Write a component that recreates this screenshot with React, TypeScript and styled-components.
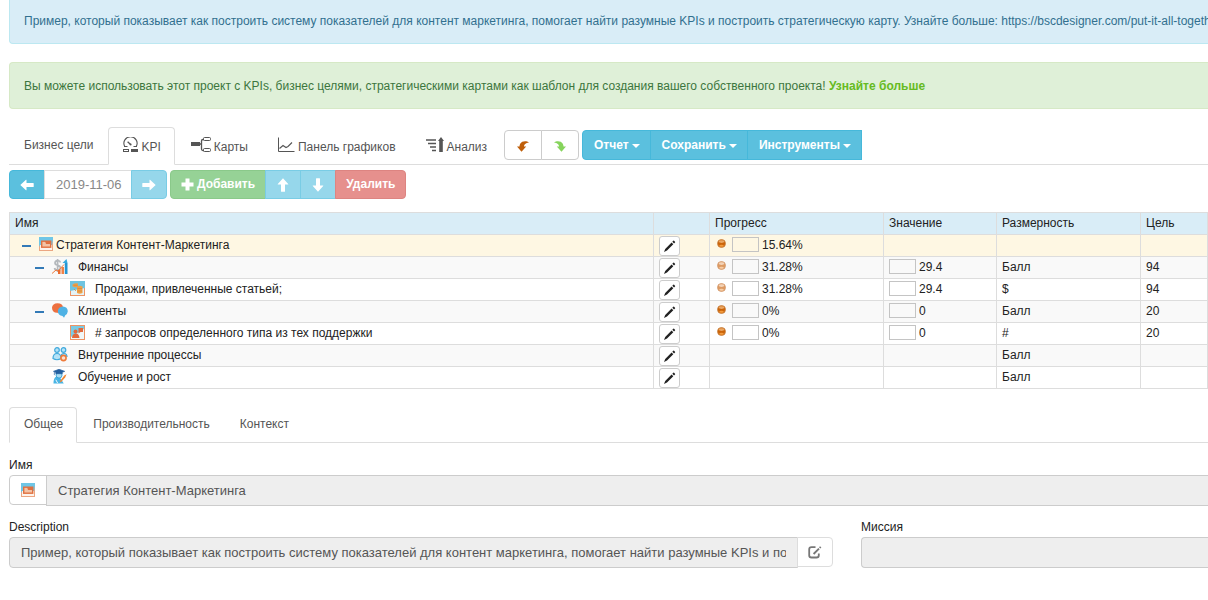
import React from "react";
import styled, { createGlobalStyle, css } from "styled-components";

const GlobalStyle = createGlobalStyle`
  * { box-sizing: border-box; }
  body {
    margin: 0;
    background: #fff;
    color: #222;
    font: 12px/17px "Liberation Sans", Arial, sans-serif;
    overflow-x: hidden;
  }
  button, input { font-family: inherit; margin: 0; }
  svg { display: block; flex: none; }
`;

/* ---------- page and notices ---------- */

const Page = styled.main`
  padding-left: 9px;
  overflow: hidden;
`;

const Notice = styled.div<{ $tone: "info" | "success"; $first?: boolean }>`
  padding: 15px 0 13px 14px;
  margin-bottom: 18px;
  border: 1px solid;
  border-right: 0;
  border-radius: 4px 0 0 4px;
  white-space: nowrap;
  overflow: hidden;
  ${(p) =>
    p.$tone === "info"
      ? css`background: #d9edf7; border-color: #bce8f1; color: #31708f;`
      : css`background: #dff0d8; border-color: #d6e9c6; color: #3c763d;`}
  ${(p) => p.$first && css`border-top: 0; border-top-left-radius: 0; padding-top: 13px;`}
`;

const NoticeLink = styled.a`
  color: #66bb22;
  font-weight: bold;
  text-decoration: none;
`;

/* ---------- tabs ---------- */

const TabBar = styled.div<{ $tall?: boolean }>`
  display: flex;
  align-items: flex-end;
  height: ${(p) => (p.$tall ? 38 : 36)}px;
  border-bottom: 1px solid #ddd;
`;

const TabList = styled.div`
  display: flex;
  align-self: stretch;
  gap: 1px;
  margin-bottom: -1px;
`;

const Tab = styled.button<{ $active?: boolean; $icon?: boolean }>`
  display: flex;
  align-items: center;
  gap: 3px;
  padding: ${(p) => (p.$icon ? "3px 13px 0 14px" : "0 13px 1px 14px")};
  border: 1px solid transparent;
  border-radius: 4px 4px 0 0;
  background: transparent;
  color: #555;
  font-size: 12px;
  line-height: 17px;
  white-space: nowrap;
  ${(p) => p.$active && css`background: #fff; border-color: #ddd; border-bottom-color: #fff;`}
`;

const TabIcon = styled.span`
  align-self: flex-start;
  padding-top: 6px;
`;

/* ---------- buttons ---------- */

type Tone = "plain" | "info" | "infoPale" | "successPale" | "dangerPale";

const tones = {
  plain: css`background: #fff; border-color: #ccc; color: #333;`,
  info: css`background: #5bc0de; border-color: #46b8da; color: #fff;`,
  infoPale: css`background: #96d7eb; border-color: #79cce5; color: #fff;`,
  successPale: css`background: #96d296; border-color: #8ac98a; color: #fff;`,
  dangerPale: css`background: #e6908d; border-color: #dd8481; color: #fff;`,
};

const Button = styled.button<{ $tone: Tone; $width?: number }>`
  display: flex;
  align-items: center;
  justify-content: center;
  gap: 3px;
  height: 100%;
  padding: 0 10px;
  border: 1px solid;
  font-size: 12px;
  font-weight: bold;
  line-height: 17px;
  white-space: nowrap;
  ${(p) => tones[p.$tone]}
  ${(p) => p.$width && css`width: ${p.$width}px; padding: 0;`}
`;

const Group = styled.div<{ $height: number; $square?: boolean }>`
  display: flex;
  height: ${(p) => p.$height}px;
  & > * + * { margin-left: -1px; }
  & > :first-child { border-radius: 4px 0 0 4px; }
  & > :last-child { border-radius: ${(p) => (p.$square ? "0" : "0 4px 4px 0")}; }
`;

const MenuButton = styled(Button)`
  padding: 0 11px;
`;

const Caret = styled.span`
  border: 4px solid transparent;
  border-top-color: currentColor;
  border-bottom: 0;
  margin-top: 2px;
  margin-right: -1px;
`;

const TabActions = styled.div`
  display: flex;
  gap: 3px;
  margin: 0 0 4px 3px;
`;

const Toolbar = styled.div`
  display: flex;
  gap: 3px;
  margin: 5px 0 13px;
`;

const DateInput = styled.input`
  width: 88px;
  padding: 0 8px 0 11px;
  border: 1px solid #ddd;
  color: #888;
  background: #fff;
  font-size: 13px;
`;

/* ---------- tree table ---------- */

const Table = styled.table`
  width: 100%;
  table-layout: fixed;
  border-collapse: collapse;
  color: #222;
`;

const HeadCell = styled.th`
  height: 22px;
  padding: 0 5px;
  border: 1px solid #ddd;
  background: #d9edf7;
  font-weight: normal;
  text-align: left;
  line-height: 17px;
`;

const Row = styled.tr<{ $selected?: boolean }>`
  background: #fff;
  &:nth-child(even) { background: #f9f9f9; }
  ${(p) => p.$selected && css`&& { background: #fef7e3; }`}
`;

const Cell = styled.td`
  height: 22px;
  padding: 0 5px;
  border: 1px solid #ddd;
  line-height: 17px;
`;

const NameLine = styled.div<{ $level: number }>`
  display: flex;
  align-items: center;
  height: 19px;
  padding-left: ${(p) => (p.$level === 0 ? 7 : 20)}px;
`;

const Toggle = styled.button`
  width: 9px;
  height: 2px;
  padding: 0;
  border: 0;
  background: #337ab7;
`;

const ToggleSpace = styled.span`
  width: 9px;
`;

const NodeIcon = styled.span<{ $level: number }>`
  padding: 0 ${(p) => (p.$level === 0 ? 3 : 10)}px 3px ${(p) => (p.$level === 2 ? 26 : 8)}px;
`;

const EditButton = styled(Button)`
  width: 21px;
  height: 20px;
  padding: 0;
  margin-top: 1px;
  border-radius: 3px;
`;

const ValueLine = styled.div`
  display: flex;
  align-items: center;
  gap: 3px;
`;

const MiniChart = styled.span`
  width: 27px;
  height: 15px;
  margin-bottom: 2px;
  border: 1px solid #c4c4c4;
`;

const Light = styled.span`
  margin: 0 3px 4px 2px;
`;

/* ---------- form ---------- */

const Form = styled.form`
  padding-top: 18px;
`;

const TabPanel = styled.div`
  padding-top: 14px;
`;

const Columns = styled.div`
  display: grid;
  grid-template-columns: 824fr 347fr;
  column-gap: 28px;
  margin-top: 13px;
`;

const Label = styled.label`
  display: block;
  height: 18px;
  line-height: 17px;
`;

const FieldLine = styled.div`
  display: flex;
  align-items: flex-start;
`;

const TextInput = styled.input<{ $corner: "left" | "none" }>`
  flex: 1;
  min-width: 0;
  height: 31px;
  padding: 0 11px;
  border: 1px solid #ccc;
  border-radius: ${(p) => (p.$corner === "left" ? "4px 0 0 4px" : "0")};
  background: #eee;
  color: #555;
  font-size: 13px;
`;

const OpenInput = styled(TextInput)`
  border-right: 0;
`;

const FieldButton = styled(Button)<{ $side: "left" | "right" }>`
  width: ${(p) => (p.$side === "left" ? 38 : 36)}px;
  height: 30px;
  padding: 0;
  border-color: ${(p) => (p.$side === "left" ? "#ccc" : "#ddd")};
  border-radius: ${(p) => (p.$side === "left" ? "4px 0 0 4px" : "0 4px 4px 0")};
  margin-right: ${(p) => (p.$side === "left" ? "-1px" : "0")};
  margin-left: ${(p) => (p.$side === "left" ? "0" : "-1px")};
`;

/* ---------- icons ---------- */

const GaugeIcon = () => (
  <svg width="15" height="16" viewBox="0 0 15 16" fill="none" stroke="#555">
    <path d="M1 9.500H4.500M10.500 9.500H14M1.600 9.300A6.600 6.600 0 1 1 13.400 9.300" strokeWidth="1.100" />
    <path d="M7.600 7.600 4.600 4.800" strokeWidth="1.300" />
    <circle cx="7.600" cy="7.600" r="1" fill="#555" stroke="none" />
    <rect x=".5" y="12.500" width="5" height="2" />
    <rect x="8" y="12" width="7" height="3" fill="#555" stroke="none" />
  </svg>
);

const MapIcon = () => (
  <svg width="20" height="16" viewBox="0 0 20 16" fill="none" stroke="#555">
    <rect x="0" y="5" width="9" height="4" fill="#555" stroke="none" />
    <path d="M9 7h1.500M13 2.500h-1q-1.500 0-1.500 1.500v8q0 1.500 1.500 1.500h1" strokeWidth="1.300" />
    <rect x="12.500" y=".5" width="7" height="3" rx="1" />
    <rect x="12.500" y="11.500" width="7" height="3" rx="1" />
  </svg>
);

const ChartIcon = () => (
  <svg width="17" height="16" viewBox="0 0 17 16" fill="none" stroke="#555">
    <path d="M.5.500V14.500H16.500" />
    <path d="M1.500 11.500 5 8.500 8 10.500 10 9.500 14 5.500" strokeWidth="1.100" />
  </svg>
);

const AnalysisIcon = () => (
  <svg width="18" height="16" viewBox="0 0 18 16" fill="none" stroke="#555">
    <path d="M0 3h10M2 6.500h8M4 10h6M6 13.500h4" strokeWidth="1.600" />
    <path d="M15 0 18 4H16.800V15H13.200V4H12z" fill="#555" stroke="none" />
  </svg>
);

const TurnIcon = ({ flip, color }: { flip?: boolean; color: string }) => (
  <svg width="12" height="13" viewBox="0 -2 12 13">
    <path
      transform={flip ? "matrix(-1 0 0 1 12 0)" : undefined}
      d="M12 1.400C9.500-.3 4.800-.3 3.200 2.800 2.700 3.800 2.500 4.600 2.500 5.400H0L4.500 10.800 9.200 5.400H7C7 3.400 8.500 1.800 12 1.400z"
      fill={color}
    />
  </svg>
);

const ArrowIcon = ({ turn = 0 }: { turn?: number }) => (
  <svg width="14" height="14" viewBox="0 0 14 14">
    <path
      transform={`rotate(${turn} 7 7)`}
      d="M.3 7 6 1.800Q6.500 1.400 6.500 2V5H13.200Q13.700 5 13.700 5.500V8.500Q13.700 9 13.200 9H6.500V12Q6.500 12.600 6 12.200z"
      fill="#fff"
    />
  </svg>
);

const PlusIcon = () => (
  <svg width="13" height="13" viewBox="0 0 13 13">
    <path d="M4.500.500h4v4h4v4h-4v4h-4v-4h-4v-4h4z" fill="#fff" />
  </svg>
);

const PencilIcon = () => (
  <svg width="13" height="13" viewBox="0 0 13 13" fill="#222">
    <path d="M8.600 2.500 10.300 4.200 4 10.500 1 12 2.200 8.900zM9.300 1.800l1-1q.4-.4.8 0l.9.900q.4.400 0 .8l-1 1z" />
  </svg>
);

const EditIcon = () => (
  <svg width="14" height="13" viewBox="0 0 14 13" fill="none" stroke="#777">
    <path d="M7.500 1.200H3.500Q1.200 1.200 1.200 3.500V9.200Q1.200 11.500 3.500 11.500H8.500Q10.800 11.500 10.800 9.200V7.500" strokeWidth="1.800" />
    <path d="M5.600 8 11 2.600M11.700 1.900l1-1" strokeWidth="1.900" />
  </svg>
);

const LightIcon = ({ pale }: { pale?: boolean }) => (
  <svg width="9" height="9" viewBox="0 0 9 9">
    <circle cx="4.500" cy="4.500" r="4" fill={pale ? "#dd9a62" : "#cc6408"} stroke={pale ? "#d39a70" : "#c98548"} strokeWidth=".8" />
    <ellipse cx="4.500" cy="2.600" rx="2.800" ry="1.300" fill={pale ? "#f3d3b8" : "#eaa765"} />
    <ellipse cx="4.500" cy="6.800" rx="2.300" ry="1" fill={pale ? "#f6cda6" : "#f39b3e"} />
  </svg>
);

const BoardIcon = () => (
  <svg width="14" height="14" viewBox="0 0 14 14">
    <rect x=".5" y=".5" width="13" height="13" fill="#fdf3ec" stroke="#eba682" />
    <path d="M0 0h14v3L13 8H1L0 10z" fill="#6fc6e6" />
    <rect x="2.700" y="4.200" width="9" height="6" fill="#f3c3a6" stroke="#e07040" strokeWidth="1.400" />
    <path d="M6 4h6v3H7z" fill="#e07040" />
  </svg>
);

const FinanceIcon = () => (
  <svg width="16" height="15" viewBox="0 0 16 15">
    <path d="M8.500 3.500Q8 1.500 5.500 1.600 3 1.800 3 4 3 5.600 5.500 6.300 8.600 7 8.500 9.200 8.300 11.300 5.500 11.300 3 11.300 2.500 9M5.600 0v13" fill="none" stroke="#b4b8bc" strokeWidth="1.700" />
    <path d="M0 14.500 4 11 6 12 12 5.500" fill="none" stroke="#ee7a3a" />
    <rect x="6" y="11" width="2.500" height="4" fill="#ec6b2d" />
    <rect x="9.500" y="8" width="2.500" height="7" fill="#f08045" />
    <rect x="12.800" y="4" width="2.700" height="11" fill="#2696d3" />
    <path d="M10.500 4 14.500 0 15.500 4z" fill="#35a8de" />
  </svg>
);

const MoneyIcon = () => (
  <svg width="15" height="15" viewBox="0 0 15 15">
    <rect x=".5" y=".5" width="14" height="14" fill="#e4f3f7" stroke="#ec9465" />
    <path d="M0 0h15v7L0 10z" fill="#6fc4e0" />
    <path d="M2.500 3.500Q5 1.500 8 2.500V5L6 6.500 2.500 5.500zM7 5.500Q9.500 4 12.500 5.500V12Q9.500 13.500 7 12z" fill="#f0a047" />
    <path d="M3.500 4.300h4M7.500 7.500h4.500M7.500 10h4.500M4 8l2 2" stroke="#d58a3c" strokeWidth=".8" fill="none" />
  </svg>
);

const ClientsIcon = () => (
  <svg width="16" height="15" viewBox="0 0 16 15">
    <path d="M0 4.500Q.5.500 5.500.3 10.500.3 11 4.500L7 10 3 9.500Q0 8 0 4.500z" fill="#ec7040" />
    <path d="M5.800 8Q6.200 3.800 11 3.500 15.500 3.800 15.800 8.300 15.600 11 13.300 12.300L12 14.800 10.500 13Q6 12.600 5.800 8z" fill="#4fb2e4" />
  </svg>
);

const SupportIcon = () => (
  <svg width="15" height="15" viewBox="0 0 15 15">
    <rect x=".5" y=".5" width="14" height="14" fill="#f0f7f8" stroke="#ec9465" />
    <path d="M1 1h13v3L1 12z" fill="#7acae4" />
    <circle cx="5.500" cy="6.500" r="2" fill="#e2693c" />
    <path d="M2 13q0-4 3.500-4.500T9.500 13zM8.500 3H13v4h-2.500L8.500 8.500z" fill="#e2693c" />
  </svg>
);

const ProcessIcon = () => (
  <svg width="16" height="15" viewBox="0 0 16 15">
    <g fill="#b5e3f7" stroke="#3fa9dc" strokeWidth="1.200">
      <circle cx="5" cy="3" r="2.300" />
      <circle cx="11.500" cy="3" r="2.300" />
      <path d="M1 11.500Q1 6.500 5 6.500T9 11.500Q5 14 1 11.500z" />
      <path d="M9 10Q9 6.500 12 6.500T15 10" />
    </g>
    <circle cx="11.500" cy="11" r="2.600" fill="#fbe1cf" stroke="#ee7b3b" strokeWidth="1.600" />
  </svg>
);

const LearningIcon = () => (
  <svg width="16" height="15" viewBox="0 0 16 16">
    <path d="M1 15.500Q1 9.500 4 8L8 9l4 6.500z" fill="#49b5e5" />
    <circle cx="7" cy="6.500" r="3.200" fill="#a9def5" stroke="#3a9fd3" />
    <path d="M1 2.500 7 .3 13 2.500 10.500 3.500V5H3.500V3.500zM2 3v3.500" fill="#235f9f" stroke="#235f9f" strokeWidth=".7" />
    <path d="M7.500 13.500 12.500 7 15 5.500 13.500 9 9 14z" fill="#f18a35" />
    <path d="M3.500 11.500 5.500 15" stroke="#fff" />
  </svg>
);

/* ---------- data ---------- */

interface Item {
  name: string;
  level: 0 | 1 | 2;
  icon: React.ReactNode;
  open?: boolean;
  progress?: string;
  pale?: boolean;
  value?: string;
  unit?: string;
  target?: string;
}

const items: Item[] = [
  { name: "Стратегия Контент-Маркетинга", level: 0, icon: <BoardIcon />, open: true, progress: "15.64%" },
  { name: "Финансы", level: 1, icon: <FinanceIcon />, open: true, progress: "31.28%", pale: true, value: "29.4", unit: "Балл", target: "94" },
  { name: "Продажи, привлеченные статьей;", level: 2, icon: <MoneyIcon />, progress: "31.28%", pale: true, value: "29.4", unit: "$", target: "94" },
  { name: "Клиенты", level: 1, icon: <ClientsIcon />, open: true, progress: "0%", value: "0", unit: "Балл", target: "20" },
  { name: "# запросов определенного типа из тех поддержки", level: 2, icon: <SupportIcon />, progress: "0%", value: "0", unit: "#", target: "20" },
  { name: "Внутренние процессы", level: 1, icon: <ProcessIcon />, unit: "Балл" },
  { name: "Обучение и рост", level: 1, icon: <LearningIcon />, unit: "Балл" },
];

const description =
  "Пример, который показывает как построить систему показателей для контент маркетинга, помогает найти разумные KPIs и построить стратегическую карту. Узнайте больше: https://bscdesigner.com/put-it-all-together.htm";

export default function App() {
  return (
    <>
      <GlobalStyle />
      <Page>
        <Notice $tone="info" $first>{description}</Notice>
        <Notice $tone="success">
          Вы можете использовать этот проект с KPIs, бизнес целями, стратегическими картами как шаблон для создания вашего
          собственного проекта! <NoticeLink href="#more">Узнайте больше</NoticeLink>
        </Notice>

        <TabBar $tall>
          <TabList role="tablist">
            <Tab role="tab">Бизнес цели</Tab>
            <Tab role="tab" aria-selected $active $icon><TabIcon><GaugeIcon /></TabIcon>KPI</Tab>
            <Tab role="tab" $icon><TabIcon><MapIcon /></TabIcon>Карты</Tab>
            <Tab role="tab" $icon><TabIcon><ChartIcon /></TabIcon>Панель графиков</Tab>
            <Tab role="tab" $icon><TabIcon><AnalysisIcon /></TabIcon>Анализ</Tab>
          </TabList>
          <TabActions>
            <Group $height={30}>
              <Button $tone="plain" $width={38} aria-label="Отменить"><TurnIcon color="#bf5f0a" /></Button>
              <Button $tone="plain" $width={38} aria-label="Повторить"><TurnIcon flip color="#86d45c" /></Button>
            </Group>
            <Group $height={30} $square>
              <MenuButton $tone="info">Отчет<Caret /></MenuButton>
              <MenuButton $tone="info">Сохранить<Caret /></MenuButton>
              <MenuButton $tone="info">Инструменты<Caret /></MenuButton>
            </Group>
          </TabActions>
        </TabBar>

        <Toolbar>
          <Group $height={29}>
            <Button $tone="info" $width={36} aria-label="Предыдущая дата"><ArrowIcon /></Button>
            <DateInput aria-label="Дата" defaultValue="2019-11-06" />
            <Button $tone="infoPale" $width={36} aria-label="Следующая дата"><ArrowIcon turn={180} /></Button>
          </Group>
          <Group $height={29}>
            <Button $tone="successPale"><PlusIcon />Добавить</Button>
            <Button $tone="infoPale" $width={36} aria-label="Вверх"><ArrowIcon turn={90} /></Button>
            <Button $tone="infoPale" $width={36} aria-label="Вниз"><ArrowIcon turn={270} /></Button>
            <Button $tone="dangerPale">Удалить</Button>
          </Group>
        </Toolbar>

        <Table>
          <colgroup>
            <col />
            <col width="56" />
            <col width="174" />
            <col width="113" />
            <col width="144" />
            <col width="67" />
          </colgroup>
          <thead>
            <tr>
              <HeadCell>Имя</HeadCell>
              <HeadCell />
              <HeadCell>Прогресс</HeadCell>
              <HeadCell>Значение</HeadCell>
              <HeadCell>Размерность</HeadCell>
              <HeadCell>Цель</HeadCell>
            </tr>
          </thead>
          <tbody>
            {items.map((item) => (
              <Row key={item.name} $selected={item.level === 0}>
                <Cell>
                  <NameLine $level={item.level}>
                    {item.open ? <Toggle aria-label="Свернуть" /> : <ToggleSpace />}
                    <NodeIcon $level={item.level}>{item.icon}</NodeIcon>
                    {item.name}
                  </NameLine>
                </Cell>
                <Cell><EditButton $tone="plain" aria-label="Изменить"><PencilIcon /></EditButton></Cell>
                <Cell>
                  {item.progress && (
                    <ValueLine><Light><LightIcon pale={item.pale} /></Light><MiniChart />{item.progress}</ValueLine>
                  )}
                </Cell>
                <Cell>{item.value && <ValueLine><MiniChart />{item.value}</ValueLine>}</Cell>
                <Cell>{item.unit}</Cell>
                <Cell>{item.target}</Cell>
              </Row>
            ))}
          </tbody>
        </Table>

        <Form onSubmit={(e) => e.preventDefault()}>
          <TabBar>
            <TabList role="tablist">
              <Tab type="button" role="tab" aria-selected $active>Общее</Tab>
              <Tab type="button" role="tab">Производительность</Tab>
              <Tab type="button" role="tab">Контекст</Tab>
            </TabList>
          </TabBar>
          <TabPanel role="tabpanel">
            <Label htmlFor="name">Имя</Label>
            <FieldLine>
              <FieldButton type="button" $tone="plain" $side="left" aria-label="Иконка"><BoardIcon /></FieldButton>
              <OpenInput id="name" $corner="none" readOnly defaultValue="Стратегия Контент-Маркетинга" />
            </FieldLine>
            <Columns>
              <div>
                <Label htmlFor="description">Description</Label>
                <FieldLine>
                  <TextInput id="description" $corner="left" readOnly defaultValue={description} />
                  <FieldButton type="button" $tone="plain" $side="right" aria-label="Редактировать"><EditIcon /></FieldButton>
                </FieldLine>
              </div>
              <div>
                <Label htmlFor="mission">Миссия</Label>
                <FieldLine>
                  <OpenInput id="mission" $corner="left" readOnly />
                </FieldLine>
              </div>
            </Columns>
          </TabPanel>
        </Form>
      </Page>
    </>
  );
}
